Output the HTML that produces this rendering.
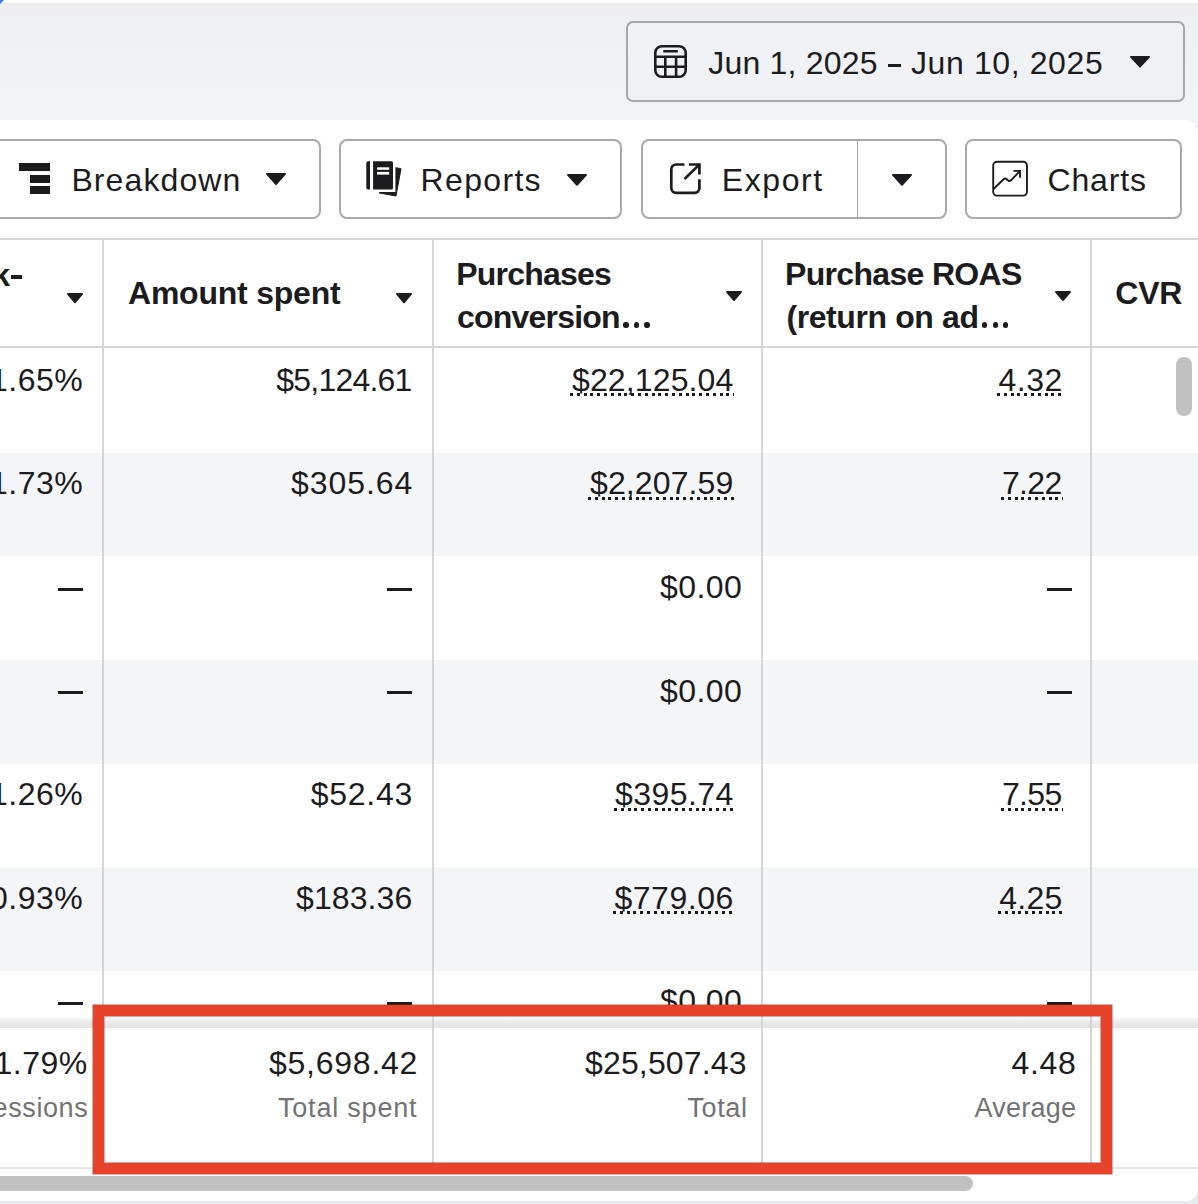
<!DOCTYPE html><html><head><meta charset="utf-8"><style>
html,body{margin:0;padding:0;}
body{width:1198px;height:1204px;position:relative;overflow:hidden;background:#e9eaed;font-family:"Liberation Sans",sans-serif;}
.t{position:absolute;white-space:nowrap;}
</style></head><body>
<div style="position:absolute;left:0px;top:0px;width:1198px;height:3px;background:#fdfdfd"></div>
<div style="position:absolute;left:0px;top:3px;width:1198px;height:122px;background:linear-gradient(#eeeef1 0,#eeeff2 25px,#f1f2f5 60px,#f2f3f6 120px)"></div>
<svg style="position:absolute;left:0;top:0" width="6" height="6"><path d="M0 0 H4 L0 4 Z" fill="#3b7be8"/></svg>
<div style="position:absolute;left:0px;top:120px;width:1198px;height:1081px;background:#ffffff;border-radius:0 14px 12px 0"></div>
<div style="position:absolute;left:625.6px;top:20.9px;width:559.2px;height:80.8px;box-sizing:border-box;border:2px solid #a5a7ad;border-radius:7px;background:#eff1f5"></div>
<svg style="position:absolute;left:654px;top:45px" width="33" height="33" viewBox="0 0 33 33" fill="none" stroke="#1c1c1e" stroke-width="2.6">
<rect x="1.3" y="1.3" width="30.4" height="30.4" rx="6.5"/>
<path d="M9.3 6.3 H23.8 M1.3 11.7 H31.7 M1.3 21.7 H31.7 M11.3 11.7 V31.7 M22.1 11.7 V31.7"/></svg>
<svg style="position:absolute;left:1128.00px;top:54.20px" width="24" height="15.4" viewBox="-2 -2 24 15.4"><path d="M0.9 0.9 H19.1 L10.0 10.700000000000001 Z" fill="#1c1c1e" stroke="#1c1c1e" stroke-width="1.8" stroke-linejoin="round"/></svg>
<div style="position:absolute;left:888px;top:64px;width:13.3px;height:2.7px;background:#1c1c1e"></div>
<div style="position:absolute;left:-20px;top:138.8px;width:341.3px;height:80.0px;box-sizing:border-box;border:2px solid #a9a9a9;border-radius:8px;background:#fff"></div>
<div style="position:absolute;left:339.4px;top:138.8px;width:282.6px;height:80.0px;box-sizing:border-box;border:2px solid #a9a9a9;border-radius:8px;background:#fff"></div>
<div style="position:absolute;left:640.6px;top:138.8px;width:306.2px;height:80.0px;box-sizing:border-box;border:2px solid #a9a9a9;border-radius:8px;background:#fff"></div>
<div style="position:absolute;left:856.6px;top:139px;width:1.8px;height:79.6px;background:#a9a9a9"></div>
<div style="position:absolute;left:965.2px;top:138.8px;width:217.0px;height:80.0px;box-sizing:border-box;border:2px solid #a9a9a9;border-radius:8px;background:#fff"></div>
<div style="position:absolute;left:19px;top:163.4px;width:31px;height:8.0px;background:#1c1c1e"></div>
<div style="position:absolute;left:30px;top:174.7px;width:20px;height:8.0px;background:#1c1c1e"></div>
<div style="position:absolute;left:30px;top:186px;width:20px;height:8px;background:#1c1c1e"></div>
<svg style="position:absolute;left:264.00px;top:171.30px" width="24" height="15.8" viewBox="-2 -2 24 15.8"><path d="M0.9 0.9 H19.1 L10.0 11.100000000000001 Z" fill="#1c1c1e" stroke="#1c1c1e" stroke-width="1.8" stroke-linejoin="round"/></svg>
<svg style="position:absolute;left:360px;top:155px" width="50" height="50" viewBox="0 0 50 50">
<path d="M24.3 10.6 L41 13.7 L36 41 L19.4 38 Z" fill="#1c1c1e" stroke="#1c1c1e" stroke-width="1" stroke-linejoin="round"/>
<rect x="10.8" y="3.9" width="24.6" height="33.1" fill="#fff"/>
<path d="M10 6.3 V34.6 H8.1 A1.8 1.8 0 0 1 6.3 32.8 V8.1 A1.8 1.8 0 0 1 8.1 6.3 Z" fill="#1c1c1e"/>
<path d="M13.1 6.3 H31.5 A1.5 1.5 0 0 1 33 7.8 V33.1 A1.5 1.5 0 0 1 31.5 34.6 H13.1 Z" fill="#1c1c1e"/>
<rect x="17.1" y="12.3" width="12.1" height="2.5" fill="#fff"/>
<rect x="17.1" y="16.9" width="12.1" height="2.7" fill="#fff"/>
</svg>
<svg style="position:absolute;left:565.00px;top:171.50px" width="24" height="15.5" viewBox="-2 -2 24 15.5"><path d="M0.9 0.9 H19.1 L10.0 10.8 Z" fill="#1c1c1e" stroke="#1c1c1e" stroke-width="1.8" stroke-linejoin="round"/></svg>
<svg style="position:absolute;left:662px;top:155px" width="50" height="50" viewBox="0 0 50 50" fill="none" stroke="#1c1c1e" stroke-width="2.7">
<path d="M22.5 9.5 H14 A4.7 4.7 0 0 0 9.3 14.2 V33.1 A4.7 4.7 0 0 0 14 37.8 H32.7 A4.7 4.7 0 0 0 37.4 33.1 V24.2"/>
<path d="M27 9.5 H37.4 V19.6"/>
<path d="M37 9.9 L23.3 23.3" stroke-linecap="round"/>
</svg>
<svg style="position:absolute;left:890.00px;top:171.50px" width="24" height="15.5" viewBox="-2 -2 24 15.5"><path d="M0.9 0.9 H19.1 L10.0 10.8 Z" fill="#1c1c1e" stroke="#1c1c1e" stroke-width="1.8" stroke-linejoin="round"/></svg>
<svg style="position:absolute;left:985px;top:154px" width="50" height="50" viewBox="0 0 50 50" fill="none" stroke="#1c1c1e" stroke-width="1.9">
<rect x="8.2" y="7.8" width="33.8" height="33.8" rx="3.8"/>
<path d="M8.5 35 L18.6 25.3 Q20.2 23.8 21.8 25.3 L22.8 26.3 Q24.4 27.8 26 26.3 L34.6 17.4"/>
<path d="M28.4 16.9 H35 V23.8"/>
</svg>
<div style="position:absolute;left:0px;top:237.5px;width:1198px;height:2.0px;background:#d5d5d7"></div>
<div style="position:absolute;left:0px;top:347.8px;width:1198px;height:105.1px;background:#ffffff"></div>
<div style="position:absolute;left:0px;top:452.9px;width:1198px;height:103.6px;background:#f4f5f7"></div>
<div style="position:absolute;left:0px;top:556.5px;width:1198px;height:103.6px;background:#ffffff"></div>
<div style="position:absolute;left:0px;top:660.1px;width:1198px;height:103.6px;background:#f4f5f7"></div>
<div style="position:absolute;left:0px;top:763.7px;width:1198px;height:103.6px;background:#ffffff"></div>
<div style="position:absolute;left:0px;top:867.3px;width:1198px;height:103.6px;background:#f4f5f7"></div>
<div style="position:absolute;left:0px;top:970.9px;width:1198px;height:103.6px;background:#ffffff"></div>
<div style="position:absolute;left:0px;top:345.8px;width:1198px;height:2.0px;background:#d5d5d7"></div>
<div style="position:absolute;left:102.3px;top:239.5px;width:2.0px;height:928.5px;background:#d5d5d7"></div>
<div style="position:absolute;left:431.7px;top:239.5px;width:2.0px;height:928.5px;background:#d5d5d7"></div>
<div style="position:absolute;left:761px;top:239.5px;width:2px;height:928.5px;background:#d5d5d7"></div>
<div style="position:absolute;left:1090.4px;top:239.5px;width:2.0px;height:928.5px;background:#d5d5d7"></div>
<div style="position:absolute;left:623.4px;top:322.3px;width:5.3px;height:5.3px;background:#1c1c1e;border-radius:50%"></div>
<div style="position:absolute;left:633.8px;top:322.3px;width:5.3px;height:5.3px;background:#1c1c1e;border-radius:50%"></div>
<div style="position:absolute;left:644.4px;top:322.3px;width:5.3px;height:5.3px;background:#1c1c1e;border-radius:50%"></div>
<div style="position:absolute;left:982px;top:322.3px;width:5.3px;height:5.3px;background:#1c1c1e;border-radius:50%"></div>
<div style="position:absolute;left:992.8px;top:322.3px;width:5.3px;height:5.3px;background:#1c1c1e;border-radius:50%"></div>
<div style="position:absolute;left:1003.1px;top:322.3px;width:5.3px;height:5.3px;background:#1c1c1e;border-radius:50%"></div>
<div style="position:absolute;left:10.5px;top:275.3px;width:11.5px;height:3.5px;background:#1c1c1e"></div>
<svg style="position:absolute;left:65.00px;top:291.00px" width="20" height="14" viewBox="-2 -2 20 14"><path d="M0.9 0.9 H15.1 L8.0 9.3 Z" fill="#1c1c1e" stroke="#1c1c1e" stroke-width="1.8" stroke-linejoin="round"/></svg>
<svg style="position:absolute;left:394.00px;top:291.00px" width="20" height="14" viewBox="-2 -2 20 14"><path d="M0.9 0.9 H15.1 L8.0 9.3 Z" fill="#1c1c1e" stroke="#1c1c1e" stroke-width="1.8" stroke-linejoin="round"/></svg>
<svg style="position:absolute;left:724.00px;top:288.60px" width="20" height="13.8" viewBox="-2 -2 20 13.8"><path d="M0.9 0.9 H15.1 L8.0 9.100000000000001 Z" fill="#1c1c1e" stroke="#1c1c1e" stroke-width="1.8" stroke-linejoin="round"/></svg>
<svg style="position:absolute;left:1053.00px;top:288.60px" width="20" height="13.8" viewBox="-2 -2 20 13.8"><path d="M0.9 0.9 H15.1 L8.0 9.100000000000001 Z" fill="#1c1c1e" stroke="#1c1c1e" stroke-width="1.8" stroke-linejoin="round"/></svg>
<div style="position:absolute;left:1176.2px;top:357.3px;width:15.5px;height:59.1px;background:#c1c1c1;border-radius:8px"></div>
<div class="t" style="left:708.30px;top:46.50px;font-size:32px;line-height:32px;font-weight:400;color:#1c1c1e;letter-spacing:0.195px">Jun 1, 2025</div>
<div class="t" style="left:911.00px;top:46.50px;font-size:32px;line-height:32px;font-weight:400;color:#1c1c1e;letter-spacing:0.605px">Jun 10, 2025</div>
<div class="t" style="left:71.40px;top:164.20px;font-size:32px;line-height:32px;font-weight:400;color:#1c1c1e;letter-spacing:1.100px">Breakdown</div>
<div class="t" style="left:420.60px;top:163.60px;font-size:32px;line-height:32px;font-weight:400;color:#1c1c1e;letter-spacing:1.326px">Reports</div>
<div class="t" style="left:721.70px;top:163.60px;font-size:32px;line-height:32px;font-weight:400;color:#1c1c1e;letter-spacing:1.601px">Export</div>
<div class="t" style="left:1047.40px;top:163.60px;font-size:32px;line-height:32px;font-weight:400;color:#1c1c1e;letter-spacing:0.890px">Charts</div>
<div class="t" style="left:-7.80px;top:258.50px;font-size:32px;line-height:32px;font-weight:700;color:#1c1c1e;letter-spacing:0.000px">k</div>
<div class="t" style="left:128.00px;top:276.70px;font-size:32px;line-height:32px;font-weight:700;color:#1c1c1e;letter-spacing:-0.222px">Amount spent</div>
<div class="t" style="left:456.20px;top:258.30px;font-size:32px;line-height:32px;font-weight:700;color:#1c1c1e;letter-spacing:-0.785px">Purchases</div>
<div class="t" style="left:457.00px;top:300.50px;font-size:32px;line-height:32px;font-weight:700;color:#1c1c1e;letter-spacing:-0.797px">conversion</div>
<div class="t" style="left:785.00px;top:258.30px;font-size:32px;line-height:32px;font-weight:700;color:#1c1c1e;letter-spacing:-0.673px">Purchase ROAS</div>
<div class="t" style="left:786.40px;top:300.50px;font-size:32px;line-height:32px;font-weight:700;color:#1c1c1e;letter-spacing:-0.398px">(return on ad</div>
<div class="t" style="left:1115.30px;top:277.00px;font-size:32px;line-height:32px;font-weight:700;color:#1c1c1e;letter-spacing:-0.277px">CVR</div>
<div class="t" style="left:-9.98px;top:363.70px;font-size:32px;line-height:32px;font-weight:400;color:#1c1c1e;letter-spacing:0.500px">1.65%</div>
<div class="t" style="left:276.30px;top:363.70px;font-size:32px;line-height:32px;font-weight:400;color:#1c1c1e;letter-spacing:-0.795px">$5,124.61</div>
<div class="t" style="left:572.00px;top:363.70px;font-size:32px;line-height:32px;font-weight:400;color:#1c1c1e;letter-spacing:0.127px">$22,125.04</div>
<div style="position:absolute;left:570px;top:393px;width:164px;height:3px;background:repeating-linear-gradient(90deg,#1c1c1e 0 3px,transparent 3px 6.8px)"></div>
<div class="t" style="left:998.60px;top:363.70px;font-size:32px;line-height:32px;font-weight:400;color:#1c1c1e;letter-spacing:0.439px">4.32</div>
<div style="position:absolute;left:997px;top:393px;width:66px;height:3px;background:repeating-linear-gradient(90deg,#1c1c1e 0 3px,transparent 3px 6.8px)"></div>
<div class="t" style="left:-9.98px;top:467.30px;font-size:32px;line-height:32px;font-weight:400;color:#1c1c1e;letter-spacing:0.500px">1.73%</div>
<div class="t" style="left:291.10px;top:467.30px;font-size:32px;line-height:32px;font-weight:400;color:#1c1c1e;letter-spacing:0.921px">$305.64</div>
<div class="t" style="left:590.00px;top:467.30px;font-size:32px;line-height:32px;font-weight:400;color:#1c1c1e;letter-spacing:0.117px">$2,207.59</div>
<div style="position:absolute;left:588px;top:497px;width:146px;height:3px;background:repeating-linear-gradient(90deg,#1c1c1e 0 3px,transparent 3px 6.8px)"></div>
<div class="t" style="left:1001.90px;top:467.30px;font-size:32px;line-height:32px;font-weight:400;color:#1c1c1e;letter-spacing:-0.661px">7.22</div>
<div style="position:absolute;left:1001px;top:497px;width:62px;height:3px;background:repeating-linear-gradient(90deg,#1c1c1e 0 3px,transparent 3px 6.8px)"></div>
<div class="t" style="left:660.00px;top:570.90px;font-size:32px;line-height:32px;font-weight:400;color:#1c1c1e;letter-spacing:0.430px">$0.00</div>
<div class="t" style="left:660.00px;top:674.50px;font-size:32px;line-height:32px;font-weight:400;color:#1c1c1e;letter-spacing:0.430px">$0.00</div>
<div class="t" style="left:-9.98px;top:778.10px;font-size:32px;line-height:32px;font-weight:400;color:#1c1c1e;letter-spacing:0.500px">1.26%</div>
<div class="t" style="left:310.70px;top:778.10px;font-size:32px;line-height:32px;font-weight:400;color:#1c1c1e;letter-spacing:0.744px">$52.43</div>
<div class="t" style="left:615.00px;top:778.10px;font-size:32px;line-height:32px;font-weight:400;color:#1c1c1e;letter-spacing:0.438px">$395.74</div>
<div style="position:absolute;left:614px;top:808px;width:120px;height:3px;background:repeating-linear-gradient(90deg,#1c1c1e 0 3px,transparent 3px 6.8px)"></div>
<div class="t" style="left:1001.90px;top:778.10px;font-size:32px;line-height:32px;font-weight:400;color:#1c1c1e;letter-spacing:-0.661px">7.55</div>
<div style="position:absolute;left:1001px;top:808px;width:62px;height:3px;background:repeating-linear-gradient(90deg,#1c1c1e 0 3px,transparent 3px 6.8px)"></div>
<div class="t" style="left:-9.98px;top:881.70px;font-size:32px;line-height:32px;font-weight:400;color:#1c1c1e;letter-spacing:0.500px">0.93%</div>
<div class="t" style="left:296.00px;top:881.70px;font-size:32px;line-height:32px;font-weight:400;color:#1c1c1e;letter-spacing:0.104px">$183.36</div>
<div class="t" style="left:614.40px;top:881.70px;font-size:32px;line-height:32px;font-weight:400;color:#1c1c1e;letter-spacing:0.538px">$779.06</div>
<div style="position:absolute;left:613px;top:911px;width:121px;height:3px;background:repeating-linear-gradient(90deg,#1c1c1e 0 3px,transparent 3px 6.8px)"></div>
<div class="t" style="left:999.30px;top:881.70px;font-size:32px;line-height:32px;font-weight:400;color:#1c1c1e;letter-spacing:0.205px">4.25</div>
<div style="position:absolute;left:998px;top:911px;width:65px;height:3px;background:repeating-linear-gradient(90deg,#1c1c1e 0 3px,transparent 3px 6.8px)"></div>
<div class="t" style="left:660.00px;top:985.30px;font-size:32px;line-height:32px;font-weight:400;color:#1c1c1e;letter-spacing:0.430px">$0.00</div>
<div style="position:absolute;left:58px;top:588px;width:25px;height:2.5px;background:#1c1c1e"></div>
<div style="position:absolute;left:387px;top:588px;width:25px;height:2.5px;background:#1c1c1e"></div>
<div style="position:absolute;left:1046.5px;top:588px;width:25.0px;height:2.5px;background:#1c1c1e"></div>
<div style="position:absolute;left:58px;top:691px;width:25px;height:2.5px;background:#1c1c1e"></div>
<div style="position:absolute;left:387px;top:691px;width:25px;height:2.5px;background:#1c1c1e"></div>
<div style="position:absolute;left:1046.5px;top:691px;width:25.0px;height:2.5px;background:#1c1c1e"></div>
<div style="position:absolute;left:58px;top:1002px;width:25px;height:2.5px;background:#1c1c1e"></div>
<div style="position:absolute;left:387px;top:1002px;width:25px;height:2.5px;background:#1c1c1e"></div>
<div style="position:absolute;left:1046.5px;top:1002px;width:25.0px;height:2.5px;background:#1c1c1e"></div>
<div style="position:absolute;left:0px;top:1017px;width:1198px;height:151px;background:#ffffff"></div>
<div style="position:absolute;left:0;top:1017px;width:1198px;height:10.5px;background:linear-gradient(#fbfbfb 0,#f2f2f4 25%,#e6e6e9 65%,#e2e2e5 100%)"></div>
<div style="position:absolute;left:102.3px;top:1017px;width:2.0px;height:151px;background:#d5d5d7"></div>
<div style="position:absolute;left:431.7px;top:1017px;width:2.0px;height:151px;background:#d5d5d7"></div>
<div style="position:absolute;left:761px;top:1017px;width:2px;height:151px;background:#d5d5d7"></div>
<div style="position:absolute;left:1090.4px;top:1017px;width:2.0px;height:151px;background:#d5d5d7"></div>
<div style="position:absolute;left:0px;top:1167px;width:1198px;height:1.5px;background:#e6e6e8"></div>
<div class="t" style="left:-5.48px;top:1046.90px;font-size:32px;line-height:32px;font-weight:400;color:#1c1c1e;letter-spacing:0.500px">1.79%</div>
<div class="t" style="left:-7.45px;top:1095.20px;font-size:27px;line-height:27px;font-weight:400;color:#737373;letter-spacing:0.600px">essions</div>
<div class="t" style="left:269.00px;top:1046.90px;font-size:32px;line-height:32px;font-weight:400;color:#1c1c1e;letter-spacing:0.755px">$5,698.42</div>
<div class="t" style="left:278.00px;top:1095.20px;font-size:27px;line-height:27px;font-weight:400;color:#737373;letter-spacing:0.792px">Total spent</div>
<div class="t" style="left:585.00px;top:1046.90px;font-size:32px;line-height:32px;font-weight:400;color:#1c1c1e;letter-spacing:0.149px">$25,507.43</div>
<div class="t" style="left:687.40px;top:1095.20px;font-size:27px;line-height:27px;font-weight:400;color:#737373;letter-spacing:0.642px">Total</div>
<div class="t" style="left:1011.40px;top:1046.90px;font-size:32px;line-height:32px;font-weight:400;color:#1c1c1e;letter-spacing:0.739px">4.48</div>
<div class="t" style="left:974.60px;top:1095.20px;font-size:27px;line-height:27px;font-weight:400;color:#737373;letter-spacing:0.240px">Average</div>
<div style="position:absolute;left:0px;top:1176.2px;width:972.5px;height:15.3px;background:#c1c1c1;border-radius:0 8px 8px 0"></div>
<div style="position:absolute;left:93px;top:1005px;width:1019px;height:168.5px;box-sizing:border-box;border:11px solid #e6432a;box-shadow:0 0 0 0.7px rgba(170,40,20,0.55), inset 0 0 0 0.7px rgba(170,40,20,0.55)"></div>
</body></html>
